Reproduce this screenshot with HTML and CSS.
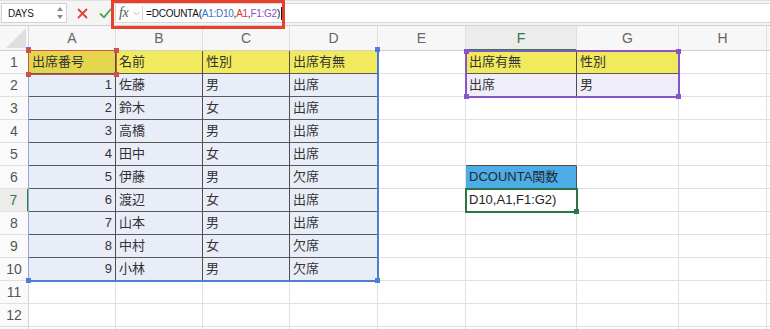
FILE: index.html
```html
<!DOCTYPE html>
<html lang="ja">
<head>
<meta charset="utf-8">
<link rel="stylesheet" href="styles.css">
</head>
<body>
<div class="app">
  <div class="toolbar">
    <div class="namebox">
      <span class="name">DAYS</span>
      <svg class="stepper" width="6" height="14" viewBox="0 0 6 14"><path d="M0 5 L3 1 L6 5 Z M0 9 L3 13 L6 9 Z" fill="#8a8a8a"/></svg>
    </div>
    <svg class="btn-x" width="11" height="11" viewBox="0 0 11 11"><path d="M1.5 1.5 L9.5 9.5 M9.5 1.5 L1.5 9.5" stroke="#e0443a" stroke-width="1.8" stroke-linecap="round"/></svg>
    <svg class="btn-ok" width="13" height="11" viewBox="0 0 13 11"><path d="M1.5 6 L5 9.3 L11.5 1.5" stroke="#3faa4a" stroke-width="1.8" fill="none" stroke-linecap="round" stroke-linejoin="round"/></svg>
    <div class="formula">
      <span class="fx">fx</span>
      <svg class="chev" width="7" height="5" viewBox="0 0 7 5"><path d="M0.5 0.8 L3.5 3.8 L6.5 0.8" stroke="#b5b5b5" stroke-width="1" fill="none"/></svg>
      <span class="sep"></span>
      <span class="ftext">=DCOUNTA(<span class="rb">A1:D10</span>,<span class="rr">A1</span>,<span class="rp">F1:G2</span>)<span class="caret"></span></span>
    </div>
    <div class="redbox"></div>
  </div>

  <div class="sheet">
    <div class="c corner"><svg width="20" height="20" viewBox="0 0 20 20"><polygon points="20,0 20,20 0,20" fill="#dedede"/></svg></div>
    <div class="c h">A</div><div class="c h">B</div><div class="c h">C</div><div class="c h">D</div><div class="c h">E</div><div class="c h hf">F</div><div class="c h">G</div><div class="c h">H</div><div class="c h"></div>

    <div class="c r">1</div>
    <div class="c t ya">出席番号</div><div class="c t y">名前</div><div class="c t y">性別</div><div class="c t y">出席有無</div>
    <div class="c"></div><div class="c t y">出席有無</div><div class="c t y">性別</div><div class="c"></div><div class="c"></div>

    <div class="c r">2</div>
    <div class="c t b num">1</div><div class="c t b">佐藤</div><div class="c t b">男</div><div class="c t b">出席</div>
    <div class="c"></div><div class="c t p">出席</div><div class="c t p">男</div><div class="c"></div><div class="c"></div>

    <div class="c r">3</div>
    <div class="c t b num">2</div><div class="c t b">鈴木</div><div class="c t b">女</div><div class="c t b">出席</div>
    <div class="c"></div><div class="c"></div><div class="c"></div><div class="c"></div><div class="c"></div>

    <div class="c r">4</div>
    <div class="c t b num">3</div><div class="c t b">高橋</div><div class="c t b">男</div><div class="c t b">出席</div>
    <div class="c"></div><div class="c"></div><div class="c"></div><div class="c"></div><div class="c"></div>

    <div class="c r">5</div>
    <div class="c t b num">4</div><div class="c t b">田中</div><div class="c t b">女</div><div class="c t b">出席</div>
    <div class="c"></div><div class="c sky-top"></div><div class="c"></div><div class="c"></div><div class="c"></div>

    <div class="c r">6</div>
    <div class="c t b num">5</div><div class="c t b">伊藤</div><div class="c t b">男</div><div class="c t b">欠席</div>
    <div class="c"></div><div class="c t sky">DCOUNTA関数</div><div class="c"></div><div class="c"></div><div class="c"></div>

    <div class="c r ra">7</div>
    <div class="c t b num">6</div><div class="c t b">渡辺</div><div class="c t b">女</div><div class="c t b">出席</div>
    <div class="c"></div><div class="c edit">D10,A1,F1:G2)</div><div class="c"></div><div class="c"></div><div class="c"></div>

    <div class="c r">8</div>
    <div class="c t b num">7</div><div class="c t b">山本</div><div class="c t b">男</div><div class="c t b">出席</div>
    <div class="c"></div><div class="c"></div><div class="c"></div><div class="c"></div><div class="c"></div>

    <div class="c r">9</div>
    <div class="c t b num">8</div><div class="c t b">中村</div><div class="c t b">女</div><div class="c t b">欠席</div>
    <div class="c"></div><div class="c"></div><div class="c"></div><div class="c"></div><div class="c"></div>

    <div class="c r">10</div>
    <div class="c t b num">9</div><div class="c t b">小林</div><div class="c t b">男</div><div class="c t b">欠席</div>
    <div class="c"></div><div class="c"></div><div class="c"></div><div class="c"></div><div class="c"></div>

    <div class="c r">11</div>
    <div class="c"></div><div class="c"></div><div class="c"></div><div class="c"></div><div class="c"></div><div class="c"></div><div class="c"></div><div class="c"></div><div class="c"></div>

    <div class="c r">12</div>
    <div class="c"></div><div class="c"></div><div class="c"></div><div class="c"></div><div class="c"></div><div class="c"></div><div class="c"></div><div class="c"></div><div class="c"></div>

    <div class="c r"></div>
    <div class="c"></div><div class="c"></div><div class="c"></div><div class="c"></div><div class="c"></div><div class="c"></div><div class="c"></div><div class="c"></div><div class="c"></div>

    <div class="range range-blue"><i class="k tl"></i><i class="k tr"></i><i class="k bl"></i><i class="k br"></i></div>
    <div class="range range-red"><i class="k tl"></i><i class="k tr"></i><i class="k bl"></i><i class="k br"></i></div>
    <div class="range range-purple"><i class="k tl"></i><i class="k tr"></i><i class="k bl"></i><i class="k br"></i></div>
    <div class="range range-active"><i class="k br"></i></div>
  </div>
</div>
</body>
</html>
```

FILE: styles.css
```css
* { box-sizing: border-box; margin: 0; padding: 0; }
html, body { width: 770px; height: 329px; overflow: hidden; background: #ffffff; }
body { font-family: "Liberation Sans", "Noto Sans CJK JP", sans-serif; color: #333; }

.app { position: relative; width: 770px; height: 329px; overflow: hidden; }

/* ---------- toolbar ---------- */
.toolbar {
  position: relative;
  height: 26px;
  display: flex;
  align-items: center;
  background: #f4f4f4;
  border-top: 1px solid #e2e2e2;
  border-bottom: 1px solid #cfcfcf;
}
.namebox {
  width: 66px;
  height: 20px;
  margin-left: 1px;
  background: #fff;
  border: 1px solid #d2d2d2;
  display: flex;
  align-items: center;
  justify-content: space-between;
  padding: 0 3px 0 6px;
}
.name { font-size: 10px; color: #222; letter-spacing: -0.2px; }
.stepper { display: block; }
.btn-x { margin-left: 10px; }
.btn-ok { margin-left: 11px; }
.formula {
  flex: 1;
  height: 20px;
  margin-left: 3px;
  background: #fff;
  border: 1px solid #d6d6d6;
  border-right: none;
  display: flex;
  align-items: center;
}
.fx {
  font-family: "Liberation Serif", serif;
  font-style: italic;
  font-size: 14px;
  color: #555;
  margin-left: 3px;
  letter-spacing: -0.5px;
}
.chev { margin-left: 5px; }
.sep { width: 1px; height: 14px; background: #d4d4d4; margin-left: 2px; }
.ftext {
  margin-left: 3px;
  font-size: 10px;
  letter-spacing: -0.25px;
  color: #111;
  display: flex;
  align-items: center;
  white-space: pre;
}
.rb { color: #3c6fc6; }
.rr { color: #d43a2c; }
.rp { color: #8a4ec4; }
.caret { display: inline-block; width: 1px; height: 13px; background: #111; margin-left: 1px; }

.redbox {
  position: absolute;
  left: 111px;
  top: -1px;
  width: 174px;
  height: 29px;
  border: 3px solid #e8402b;
  z-index: 5;
}

/* ---------- sheet ---------- */
.sheet {
  position: relative;
  display: grid;
  grid-template-columns: 29px 87px 87px 87px 88px 88px 111px 102px 88px 1fr;
  grid-template-rows: 25px;
  grid-auto-rows: 23px;
}
.c {
  border-right: 1px solid #e0e0e0;
  border-bottom: 1px solid #e0e0e0;
  font-size: 13px;
  line-height: 22px;
  padding-left: 3px;
  white-space: nowrap;
  overflow: hidden;
  color: #333;
}
.corner {
  background: #f7f7f7;
  border-right: 1px solid #d8d8d8;
  border-bottom: 1px solid #d0d0d0;
  padding: 2px 0 0 6px;
  display: flex;
  align-items: flex-end;
  justify-content: flex-end;
}
.corner svg { margin: 0 2px 2px 0; display: block; }
.h {
  background: #f7f7f7;
  text-align: center;
  padding: 0;
  line-height: 24px;
  font-size: 14px;
  color: #666;
  border-right: 1px solid #e0e0e0;
  border-bottom: 1px solid #d0d0d0;
}
.hf { background: #ececec; color: #2b7a4b; border-bottom: 2px solid #2f7d4c; }
.r {
  background: #fafafa;
  text-align: center;
  padding: 0;
  font-size: 14px;
  color: #555;
  border-right: 1px solid #d4d4d4;
}
.ra { background: #ececec; color: #2b7a4b; border-right: 2px solid #2f7d4c; }

.t { border-right: 1px solid #4f4f4f; border-bottom: 1px solid #5a5a5a; }
.y { background: #f1ea5c; }
.ya { background: #e6d64d; }
.b { background: #e9edf7; }
.p { background: #efedf8; }
.num { text-align: right; padding: 0 3px 0 0; }
.sky { background: #4eace7; color: #1f2a33; }
.sky-top { border-bottom: 1px solid #4f4f4f; }
.edit { padding-left: 3px; color: #222; }

/* ---------- range overlays ---------- */
.range { position: absolute; pointer-events: none; z-index: 3; }
.range-blue {
  left: 28px; top: 24px; width: 351px; height: 232px;
  border: 2px solid #4c7ed8;
  border-left: 1px solid #8fa8d8;
  border-top: none;
}
.range-red {
  left: 28px; top: 24px; width: 89px; height: 25px;
  border: 1px solid #d0504a;
  z-index: 4;
}
.range-purple {
  left: 465px; top: 24px; width: 215px; height: 48px;
  border: 2px solid #8656c8;
}
.range-active {
  left: 465px; top: 162px; width: 113px; height: 25px;
  border: 2px solid #2a7446;
}
.k { position: absolute; width: 5px; height: 5px; }
.range-blue .k { background: #4c7ed8; }
.range-red .k { background: #d0504a; }
.range-purple .k { background: #8656c8; }
.range-active .k { background: #2a7446; }
.tl { left: -3px; top: -3px; }
.tr { right: -3px; top: -3px; }
.bl { left: -3px; bottom: -3px; }
.br { right: -3px; bottom: -3px; }
```
